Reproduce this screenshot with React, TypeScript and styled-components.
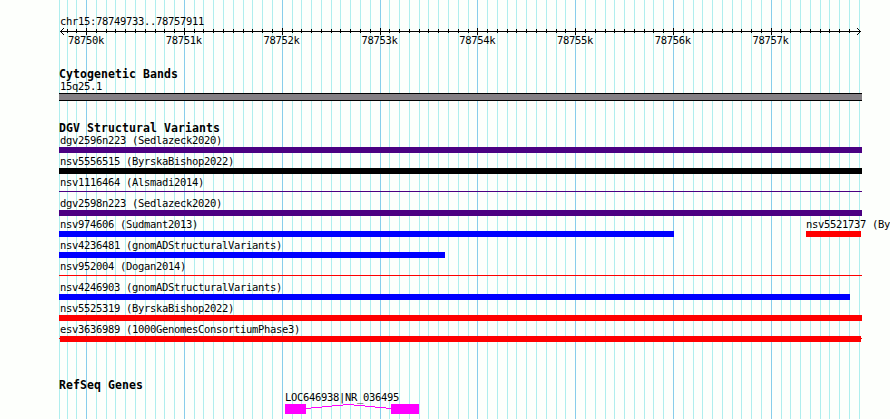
import styled, { createGlobalStyle } from 'styled-components';

interface IFeature {
  name: string;
  start: number;
  end: number;
  color: string;
  thin?: boolean;
  capped?: boolean;
}

const REGION_START = 78749733;
const PX_PER_BASE = 800 / 8179;

const toX = (pos: number) => Math.round(60 + (pos - REGION_START) * PX_PER_BASE);

const ticks = Array.from({ length: 82 }, (_, i) => {
  const pos = 78749800 + i * 100;
  return { pos, x: toX(pos), major: pos % 1000 === 0 };
});

const labels = ticks.filter((t) => t.major);

// start and end are pixel columns inside the image
const variants: IFeature[][] = [
  [{ name: 'dgv2596n223 (Sedlazeck2020)', start: 59, end: 862, color: '#4b0082' }],
  [{ name: 'nsv5556515 (ByrskaBishop2022)', start: 59, end: 862, color: '#000' }],
  [{ name: 'nsv1116464 (Alsmadi2014)', start: 59, end: 862, color: '#4b0082', thin: true }],
  [{ name: 'dgv2598n223 (Sedlazeck2020)', start: 59, end: 862, color: '#4b0082' }],
  [
    { name: 'nsv974606 (Sudmant2013)', start: 59, end: 674, color: '#00f' },
    { name: 'nsv5521737 (By', start: 806, end: 861, color: '#f00' },
  ],
  [{ name: 'nsv4236481 (gnomADStructuralVariants)', start: 59, end: 445, color: '#00f' }],
  [{ name: 'nsv952004 (Dogan2014)', start: 59, end: 862, color: '#f00', thin: true }],
  [{ name: 'nsv4246903 (gnomADStructuralVariants)', start: 59, end: 850, color: '#00f' }],
  [{ name: 'nsv5525319 (ByrskaBishop2022)', start: 59, end: 862, color: '#f00' }],
  [{ name: 'esv3636989 (1000GenomesConsortiumPhase3)', start: 59, end: 862, color: '#f00', capped: true }],
];

function GridLines() {
  return (
    <GridSvg width="890" height="419" shapeRendering="crispEdges">
      <rect x={59} y={0} width={1} height={419} fill="#afeeee" />
      {ticks.map((t) => (
        <rect key={t.pos} x={t.x} y={0} width={1} height={419} fill={t.major ? '#87ceeb' : '#afeeee'} />
      ))}
    </GridSvg>
  );
}

function Ruler() {
  return (
    <RulerBox>
      <Label>chr15:78749733..78757911</Label>
      <RulerSvg width="890" height="8" shapeRendering="crispEdges">
        <rect x={60} y={3} width={801} height={1} />
        {ticks.slice(0, -1).map((t) => (
          <rect key={t.pos} x={t.x} y={t.major ? 0 : 1} width={1} height={t.major ? 7 : 4} />
        ))}
        <path d="M61 2h1v1h-1zM62 1h1v1h-1zM63 0h1v1h-1zM61 4h1v1h-1zM62 5h1v1h-1zM63 6h1v1h-1z" />
        <path d="M859 2h1v1h-1zM858 1h1v1h-1zM857 0h1v1h-1zM859 4h1v1h-1zM858 5h1v1h-1zM857 6h1v1h-1z" />
      </RulerSvg>
      <RulerLabels>
        {labels.map((t) => (
          <RulerLabel key={t.pos}>{t.pos / 1000}k</RulerLabel>
        ))}
      </RulerLabels>
    </RulerBox>
  );
}

function VariantRow({ features }: { features: IFeature[] }) {
  return (
    <Row>
      {features.map((f, index) => (
        <Feature
          key={f.name}
          gap={f.start - (index === 0 ? 59 : features[index - 1].end)}
          size={f.end - f.start}
        >
          <Label inset={index === 0 ? 1 : 0}>{f.name}</Label>
          <Bar color={f.color} thin={f.thin} capped={f.capped} />
        </Feature>
      ))}
    </Row>
  );
}

function App() {
  return (
    <Page>
      <GlobalStyle />
      <GridLines />
      <Content>
        <Ruler />
        <Track top={21}>
          <Title>Cytogenetic Bands</Title>
          <Label>15q25.1</Label>
          <Band />
        </Track>
        <Track top={21}>
          <Title>DGV Structural Variants</Title>
          {variants.map((features) => (
            <VariantRow key={features[0].name} features={features} />
          ))}
        </Track>
        <Track top={35}>
          <Title>RefSeq Genes</Title>
          <Gene>
            <Label inset={0}>LOC646938|NR_036495</Label>
            <GeneSvg width="134" height="10" shapeRendering="crispEdges">
              <rect x={0} y={0} width={21} height={10} fill="#f0f" />
              <rect x={106} y={0} width={28} height={10} fill="#f0f" />
              <path d="M21 4.5L63.5 0.5L106 4.5" fill="none" stroke="#f0f" />
            </GeneSvg>
          </Gene>
        </Track>
      </Content>
    </Page>
  );
}

export default App;

const GlobalStyle = createGlobalStyle`
  body {
    margin: 0;
    background-color: #fdfffc;
    overflow: hidden;
  }
`;

const Page = styled.div`
  position: relative;
  width: 890px;
  height: 419px;
  overflow: hidden;
  color: #000;
  font-family: 'DejaVu Sans Mono', 'Liberation Mono', monospace;
`;

const GridSvg = styled.svg`
  position: absolute;
  inset: 0;
`;

const Content = styled.div`
  position: relative;
  padding: 15px 0 0 59px;
`;

const Label = styled.div<{ inset?: number }>`
  height: 13px;
  padding-left: ${({ inset = 1 }) => inset}px;
  font-size: 10.5px;
  line-height: 13px;
  letter-spacing: -0.322px;
  white-space: pre;
`;

const Title = styled.h2`
  height: 12px;
  margin: 0;
  font-size: 11.5px;
  font-weight: 700;
  line-height: 13px;
  letter-spacing: 0.076px;
  white-space: pre;
`;

const RulerBox = styled.div`
  height: 32px;
`;

const RulerSvg = styled.svg`
  display: block;
  margin-left: -59px;
`;

const RulerLabels = styled.div`
  display: grid;
  grid-template-columns: repeat(8, 97.8px);
  margin: -2px 0 0 9px;
`;

const RulerLabel = styled(Label)`
  padding: 0;
`;

const Track = styled.section<{ top: number }>`
  padding-top: ${({ top }) => top}px;
`;

const Band = styled.div`
  width: 803px;
  height: 8px;
  box-sizing: border-box;
  border: solid #000;
  border-width: 1px 0;
  background-color: #848084;
`;

const Row = styled.div`
  display: flex;
  height: 21px;
`;

const Feature = styled.div<{ gap: number; size: number }>`
  flex: none;
  width: ${({ size }) => size}px;
  margin-left: ${({ gap }) => gap}px;
`;

const Bar = styled.div<{ color: string; thin?: boolean; capped?: boolean }>`
  height: ${({ thin }) => (thin ? 1 : 6)}px;
  margin-top: ${({ thin }) => (thin ? 2 : 0)}px;
  background: ${({ color, capped }) =>
    capped
      ? `linear-gradient(${color}, ${color}) 1px 0 / 801px 6px no-repeat,
         linear-gradient(${color}, ${color}) 0 2px / 803px 1px no-repeat`
      : color};
`;

const Gene = styled.div`
  width: 134px;
  margin-left: 226px;
`;

const GeneSvg = styled.svg`
  display: block;
`;
